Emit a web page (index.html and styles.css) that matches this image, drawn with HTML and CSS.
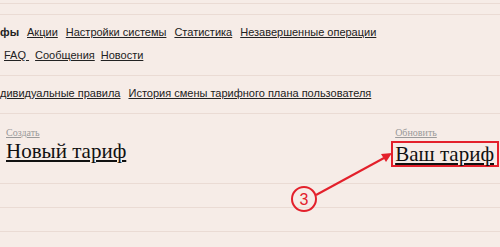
FILE: index.html
```html
<!DOCTYPE html>
<html lang="ru">
<head>
<meta charset="utf-8">
<link rel="stylesheet" href="styles.css">
</head>
<body>
<div class="page">
  <div class="topstrip"></div>
  <div class="nav">
    <div class="nav-row">
      <b class="current">фы</b>
      <a href="#">Акции</a>
      <a href="#">Настройки системы</a>
      <a href="#">Статистика</a>
      <a href="#">Незавершенные операции</a>
    </div>
    <div class="nav-row row2">
      <a href="#">FAQ&nbsp;</a>
      <a href="#">Сообщения</a>
      <a href="#">Новости</a>
    </div>
  </div>
  <div class="subnav">
    <a href="#">дивидуальные правила</a>
    <a href="#">История смены тарифного плана пользователя</a>
  </div>
  <div class="content">
    <div class="col">
      <a class="small" href="#">Создать</a>
      <a class="big" href="#">Новый тариф</a>
    </div>
    <div class="col">
      <a class="small" href="#">Обновить</a>
      <a class="big boxed" href="#">Ваш тариф</a>
    </div>
  </div>
  <div class="stripe"></div>
  <div class="stripe"></div>
  <div class="stripe"></div>
  <svg class="annot" width="500" height="247" viewBox="0 0 500 247">
    <circle cx="304" cy="199" r="12" fill="none" stroke="#e3202b" stroke-width="2"/>
    <text x="304" y="205" text-anchor="middle" font-family="Liberation Sans, Arial, sans-serif" font-size="16" fill="#e3202b">3</text>
    <line x1="316" y1="195" x2="384" y2="158" stroke="#e3202b" stroke-width="2"/>
    <polygon points="392,153 381,154 386,162" fill="#e3202b"/>
  </svg>
</div>
</body>
</html>
```
FILE: styles.css
```css
html, body {
  margin: 0;
  padding: 0;
  background: #f6ece7;
}
.page {
  position: relative;
  width: 500px;
  height: 247px;
  overflow: hidden;
  font-family: "Liberation Sans", Arial, sans-serif;
  font-size: 11px;
  color: #222;
}
a { color: #222; }
.topstrip {
  margin-top: 3px;
  height: 10px;
  border-top: 1px solid #eadbd4;
  border-bottom: 1px solid #eadbd4;
}
.nav {
  padding: 6px 0 8px 0;
  height: 46px;
  border-bottom: 1px solid #eadbd4;
}
.nav-row {
  display: flex;
  gap: 8px;
  line-height: 23px;
  white-space: nowrap;
}
.nav-row.row2 {
  padding-left: 4px;
  gap: 6px;
}
.nav-row .current {
  color: #222;
  font-weight: bold;
}
.subnav {
  display: flex;
  gap: 8px;
  padding: 7px 0 10px 0;
  line-height: 20px;
  white-space: nowrap;
  border-bottom: 1px solid #eadbd4;
}
.content {
  display: flex;
  justify-content: space-between;
  padding: 13px 1px 0 6px;
  height: 56px;
  border-bottom: 1px solid #eadbd4;
}
.col {
  display: flex;
  flex-direction: column;
  align-items: flex-start;
}
.small {
  font-family: "Liberation Serif", "Times New Roman", serif;
  font-size: 10px;
  line-height: 12px;
  color: #9a9a9a;
}
.big {
  font-family: "Liberation Serif", "Times New Roman", serif;
  font-size: 21px;
  line-height: 25px;
  color: #111;
  white-space: nowrap;
}
.boxed {
  margin: 2px 0 0 -4px;
  padding: 0 3px 0 2px;
  line-height: 22px;
  border: 2px solid #e3202b;
}
.stripe {
  height: 23px;
  border-bottom: 1px solid #eadbd4;
}
.annot {
  position: absolute;
  left: 0;
  top: 0;
  pointer-events: none;
}
```
